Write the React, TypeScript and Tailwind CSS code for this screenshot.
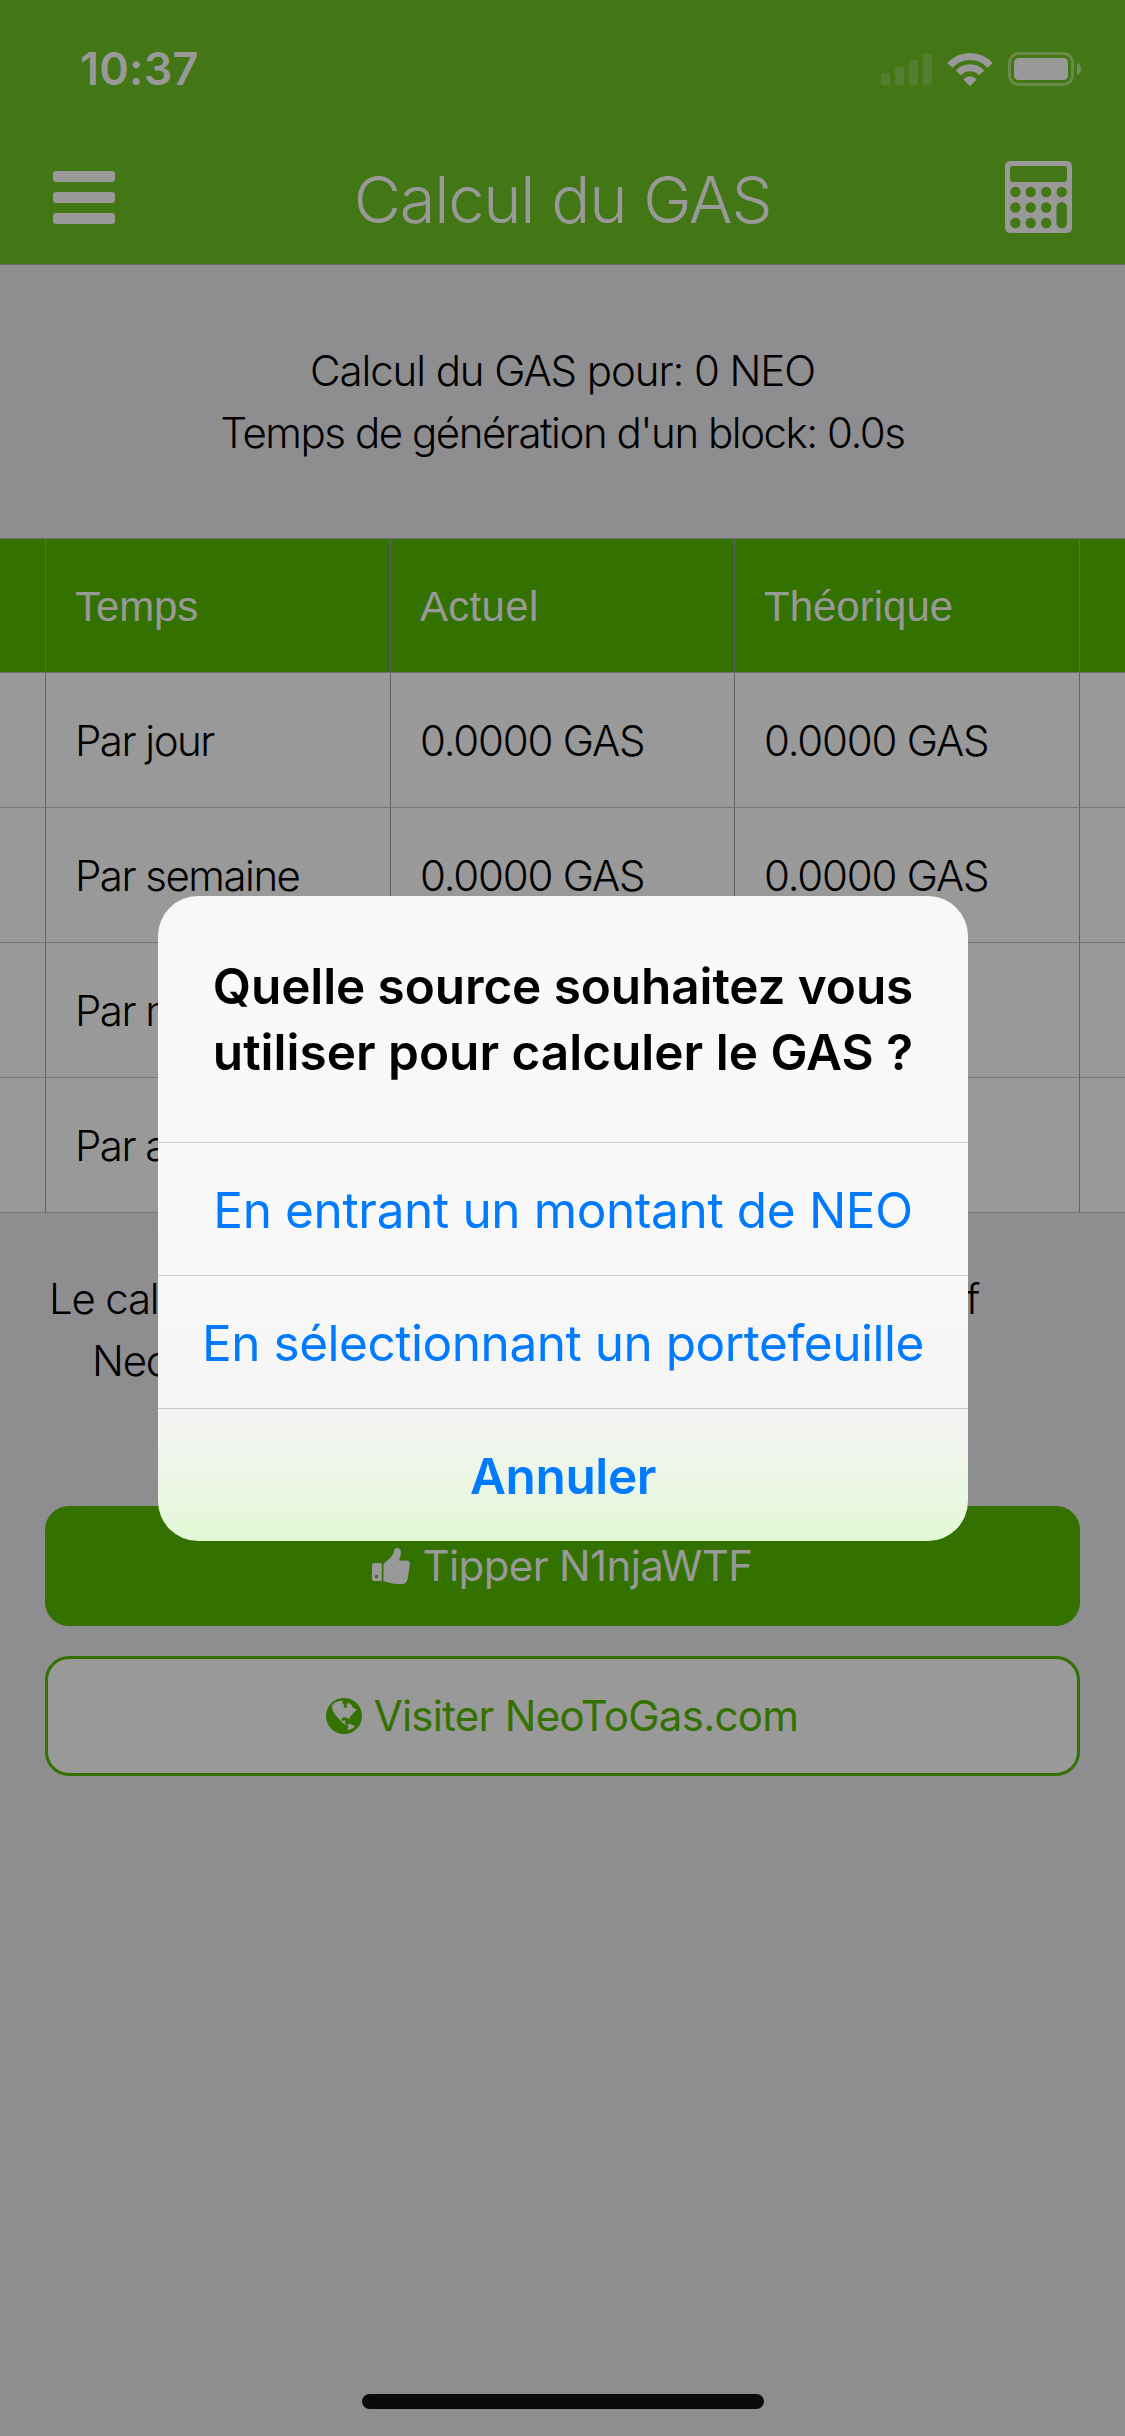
import React from 'react';

const rows = [
  { label: 'Par jour', value: '0.0000 GAS' },
  { label: 'Par semaine', value: '0.0000 GAS' },
  { label: 'Par mois', value: '' },
  { label: 'Par an', value: '' },
];

function SignalIcon() {
  return (
    <svg width="51" height="34" viewBox="0 0 51 34" fill="#567e33">
      <rect x="0" y="21" width="9" height="12" rx="2.5" />
      <rect x="14" y="15" width="9" height="18" rx="2.5" />
      <rect x="28" y="8" width="9" height="25" rx="2.5" />
      <rect x="42" y="1" width="9" height="32" rx="2.5" />
    </svg>
  );
}

function WifiIcon() {
  return (
    <svg width="46" height="35" viewBox="0 0 46 35" fill="none" stroke="#999999" strokeWidth="7">
      <path d="M2.9 13.4A27 27 0 0 1 43.1 13.4" />
      <path d="M11.3 20.9A15.8 15.8 0 0 1 34.7 20.9" />
      <path d="M16.4 27.8C20 23 26 23 29.6 27.8L23 34.3Z" fill="#999999" stroke="none" />
    </svg>
  );
}

function BatteryIcon() {
  return (
    <svg width="74" height="34" viewBox="0 0 74 34">
      <rect x="1.5" y="1.5" width="63" height="31" rx="9" fill="none" stroke="#688b4a" strokeWidth="3" />
      <rect x="6" y="6" width="54" height="22" rx="4.5" fill="#999999" />
      <path d="M69 11C74.3 13 74.3 21 69 23Z" fill="#729158" />
    </svg>
  );
}

function CalculatorIcon() {
  return (
    <svg width="67" height="72" viewBox="0 0 67 72">
      <rect width="67" height="72" rx="5" fill="#999999" />
      <g fill="#437614">
        <rect x="5" y="5" width="57" height="16" rx="3" />
        <circle cx="10.4" cy="31" r="5.2" />
        <circle cx="25.7" cy="31" r="5.2" />
        <circle cx="41.2" cy="31" r="5.2" />
        <circle cx="56.7" cy="31" r="5.2" />
        <circle cx="10.4" cy="46.5" r="5.2" />
        <circle cx="25.7" cy="46.5" r="5.2" />
        <circle cx="41.2" cy="46.5" r="5.2" />
        <circle cx="10.4" cy="62" r="5.2" />
        <circle cx="25.7" cy="62" r="5.2" />
        <circle cx="41.2" cy="62" r="5.2" />
        <rect x="51.5" y="41" width="10.4" height="26.2" rx="5.2" />
      </g>
    </svg>
  );
}

function ThumbIcon() {
  return (
    <svg width="40" height="38" viewBox="0 0 40 38" fill="#999999">
      <path
        fillRule="evenodd"
        d="M3 16H9.3Q10.8 16 10.8 17.5V34H3Q1 34 1 32V18Q1 16 3 16ZM5.5 27.8A1.6 1.6 0 1 0 5.5 31A1.6 1.6 0 1 0 5.5 27.8Z"
      />
      <path d="M12.5 17L18.5 11.5C22 8.5 22.6 6 23.2 3.2C23.6 1.4 24.6 1 26 1C29 1 30.2 3 30 6C29.8 9 28.3 10.8 28 13.5L35 13.5C38 13.5 39.3 15.5 38.9 18L36.6 32C36 35.5 34 37 31 37L27 37C21 37 16 35.2 12.5 34Z" />
    </svg>
  );
}

function GlobeIcon() {
  return (
    <svg width="36" height="36" viewBox="18 24 108 108">
      <circle cx="72" cy="78" r="54" fill="#337100" />
      <path
        fill="#999999"
        d="M35 47L44 38L58 32L70 33L66 40L73 43L70 49L76 54L82 53L79 45L84 38L93 43L98 52L111 60L103 66L95 75L90 80L88 88L83 85L72 81L65 86L66 94L73 91L77 94L74 98L81 105L75 104L66 97L57 88L46 75L38 62Z"
      />
      <path fill="#999999" d="M83 103L90 101L104 109L100 115L82 121L85 112Z" />
    </svg>
  );
}

function Cell({ children, className }: { children?: React.ReactNode; className: string }) {
  return <div className={`flex items-center border-l border-[#636365] pl-[29px] ${className}`}>{children}</div>;
}

export default function App() {
  return (
    <div className="relative flex h-[2436px] w-[1125px] flex-col overflow-hidden whitespace-nowrap bg-[#8e8e90] font-['Inter',sans-serif] text-[42px] font-light text-black">
      <header className="h-[265px] border-b border-[#68696a] bg-[#437614] text-[#999999]">
        <div className="flex h-[131px] items-start justify-between pl-[80px] pr-[43px] pt-[51px]">
          <span className="mt-[-9px] text-[45px] font-semibold leading-[54px] tracking-[0.2px]">10:37</span>
          <div className="flex items-start gap-[15px] pt-px">
            <SignalIcon />
            <WifiIcon />
            <BatteryIcon />
          </div>
        </div>
        <div className="flex h-[132px] items-center justify-between pl-[53px] pr-[53px]">
          <div className="flex w-[67px] flex-col gap-[10px]">
            <div className="h-[11px] w-[62px] rounded-[3px] bg-[#999999]" />
            <div className="h-[11px] w-[62px] rounded-[3px] bg-[#999999]" />
            <div className="h-[11px] w-[62px] rounded-[3px] bg-[#999999]" />
          </div>
          <h1 className="pt-[5px] text-[65px] font-[260] leading-[78px] tracking-[-1.25px]">Calcul du GAS</h1>
          <CalculatorIcon />
        </div>
      </header>

      <section className="h-[273px] pt-[75px] text-center leading-[62px]">
        <p className="tracking-[-1.09px]">Calcul du GAS pour: 0 NEO</p>
        <p className="tracking-[-1.46px]">Temps de génération d'un block: 0.0s</p>
      </section>

      <section className="border-t border-[#6f6f71] bg-[#999999]">
        <div className="flex h-[134px] border-b border-[#6f6f71] bg-[#337100] font-['Liberation_Sans',sans-serif] font-normal text-[#999999]">
          <div className="w-[45px]" />
          <Cell className="w-[345px] pt-0.5 tracking-[-0.1px]">Temps</Cell>
          <Cell className="w-[344px] pt-0.5 tracking-[0.3px]">Actuel</Cell>
          <Cell className="w-[345px] pt-0.5">Théorique</Cell>
          <Cell className="w-[46px]" />
        </div>
        {rows.map(({ label, value }) => (
          <div key={label} className="flex h-[135px] border-b border-[#777778]">
            <div className="w-[45px]" />
            <Cell className="w-[345px] pt-px tracking-[-1.5px]">{label}</Cell>
            <Cell className="w-[344px] pt-px tracking-[-1.2px]">{value}</Cell>
            <Cell className="w-[345px] pt-px tracking-[-1.2px]">{value}</Cell>
            <Cell className="w-[46px]" />
          </div>
        ))}
      </section>

      <section className="h-[293px] pt-[55px] leading-[62px] tracking-[-1.2px]">
        <div className="flex justify-between pl-[49px] pr-[146px]">
          <span>Le cal</span>
          <span>f</span>
        </div>
        <div className="pl-[92px]">Neo</div>
      </section>

      <div className="flex flex-col gap-[30px] px-[45px] font-normal">
        <button className="flex h-[120px] items-center justify-center gap-3 rounded-[24px] bg-[#337100] pr-[2px] text-[#999999]">
          <ThumbIcon />
          <span className="pb-px tracking-[-0.63px]">Tipper N1njaWTF</span>
        </button>
        <button className="flex h-[120px] items-center justify-center gap-3 rounded-[24px] border-[3px] border-[#337100] bg-[#999999] pr-px text-[#337100]">
          <GlobeIcon />
          <span className="pb-px tracking-[-0.72px]">Visiter NeoToGas.com</span>
        </button>
      </div>

      <div className="mx-auto mb-[27px] mt-auto h-[15px] w-[402px] rounded-full bg-[#0b0b0b]" />

      <div className="absolute inset-0 flex items-center justify-center pt-px">
        <div
          role="dialog"
          className="flex h-[645px] w-[810px] flex-col overflow-hidden rounded-[40px] bg-[linear-gradient(to_bottom,#f8f8f8_0%,#f9f9f9_40%,#f8f8f8_58%,#f5f5f5_78%,#f2f5f0_84%,#eaf6e2_93%,#e2f8d4_100%)] text-center text-[49.5px] font-normal text-[#007aff]"
        >
          <h2 className="h-[246px] pl-px pt-[57px] font-semibold leading-[66px] text-black">
            <span className="block tracking-[-0.1px]">Quelle source souhaitez vous</span>
            <span className="block">utiliser pour calculer le GAS ?</span>
          </h2>
          <button className="h-[133px] border-t border-[#d0d0d3] pl-px pt-0.5 tracking-[-0.35px]">En entrant un montant de NEO</button>
          <button className="h-[133px] border-t border-[#cdcdd2] pl-px pt-0.5 tracking-[-0.46px]">En sélectionnant un portefeuille</button>
          <button className="h-[133px] border-t border-[#c6c9c8] pl-px pt-0.5 font-semibold tracking-[-0.37px]">Annuler</button>
        </div>
      </div>
    </div>
  );
}
